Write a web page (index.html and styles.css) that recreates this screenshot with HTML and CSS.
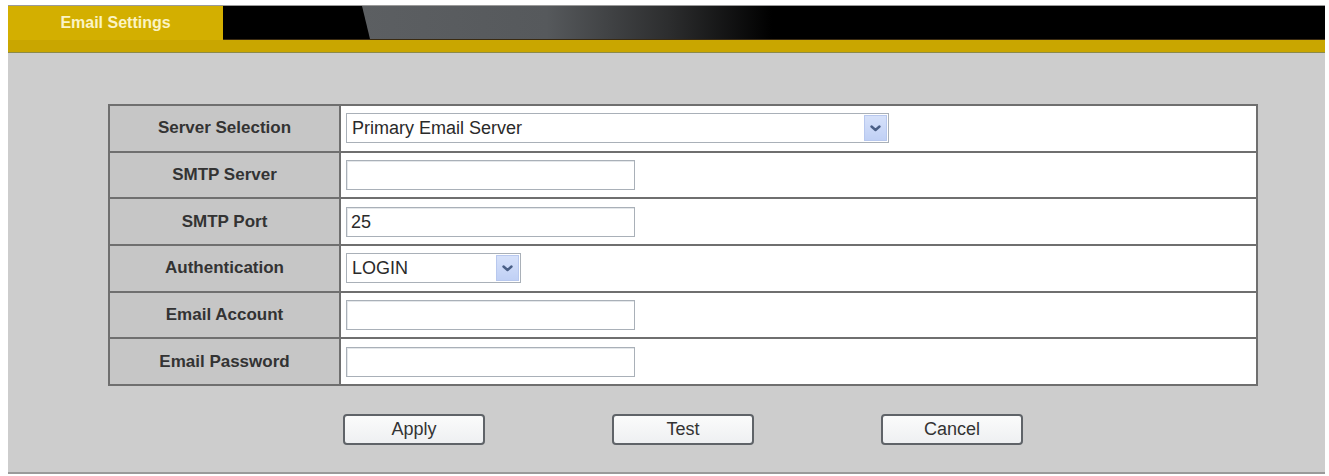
FILE: index.html
```html
<!DOCTYPE html>
<html>
<head>
<meta charset="utf-8">
<title>Email Settings</title>
<link rel="stylesheet" href="styles.css">
</head>
<body>
<div class="page">
  <div class="header">
    <div class="tab">Email Settings</div>
    <div class="bar"><div class="sheen"></div></div>
  </div>
  <div class="band"></div>
  <div class="panel">
    <table class="form">
      <tr>
        <td class="label">Server Selection</td>
        <td class="value">
          <div class="select wide"><span class="sel-text">Primary Email Server</span><span class="arrow"><svg width="11" height="7" viewBox="0 0 11 7"><path d="M1.5 1.5 L5.5 5 L9.5 1.5" fill="none" stroke="#4a5f86" stroke-width="2.4" stroke-linecap="round" stroke-linejoin="round"/></svg></span></div>
        </td>
      </tr>
      <tr>
        <td class="label">SMTP Server</td>
        <td class="value"><div class="input"></div></td>
      </tr>
      <tr>
        <td class="label">SMTP Port</td>
        <td class="value"><div class="input">25</div></td>
      </tr>
      <tr>
        <td class="label">Authentication</td>
        <td class="value">
          <div class="select narrow"><span class="sel-text">LOGIN</span><span class="arrow"><svg width="11" height="7" viewBox="0 0 11 7"><path d="M1.5 1.5 L5.5 5 L9.5 1.5" fill="none" stroke="#4a5f86" stroke-width="2.4" stroke-linecap="round" stroke-linejoin="round"/></svg></span></div>
        </td>
      </tr>
      <tr>
        <td class="label">Email Account</td>
        <td class="value"><div class="input"></div></td>
      </tr>
      <tr>
        <td class="label">Email Password</td>
        <td class="value"><div class="input"></div></td>
      </tr>
    </table>
    <div class="buttons">
      <button class="btn">Apply</button>
      <button class="btn">Test</button>
      <button class="btn">Cancel</button>
    </div>
  </div>
</div>
</body>
</html>
```
FILE: styles.css
```css
html, body {
  margin: 0;
  padding: 0;
  background: #ffffff;
}
body {
  font-family: "Liberation Sans", Arial, sans-serif;
}
.page {
  margin: 5px 4px 0 8px;
}
.header {
  display: flex;
  height: 35px;
  border-top: 1px solid #9a9a9a;
  box-sizing: border-box;
}
.tab {
  width: 215px;
  background: #d3af00;
  color: #fbf4c4;
  font-weight: bold;
  font-size: 16px;
  text-align: center;
  line-height: 33px;
}
.bar {
  flex: 1;
  background: #000;
  display: flex;
  border-bottom: 1px solid #3a2a10;
}
.sheen {
  margin-left: 139px;
  width: 410px;
  clip-path: polygon(0 0, 100% 0, 100% 100%, 8px 100%);
  background: linear-gradient(to right, #5c5f62 0%, #56595c 45%, #2c2d2e 75%, #000 100%);
}
.band {
  height: 12px;
  background: #c9a600;
  border-bottom: 1px solid #8c8a48;
}
.panel {
  background: #cdcdcd;
  border-bottom: 2px solid #9a9a9a;
  padding: 51px 0 0 100px;
  height: 421px;
  box-sizing: border-box;
}
.form {
  width: 1150px;
  border-collapse: collapse;
  border: 2px solid #6f6f6f;
}
.form td {
  border: 2px solid #6f6f6f;
  height: 44.67px;
  padding: 0;
}
.label {
  width: 229px;
  background: #c6c6c6;
  color: #333333;
  font-weight: bold;
  font-size: 17px;
  text-align: center;
}
.value {
  background: #ffffff;
  padding-left: 5px !important;
}
.input, .select {
  height: 30px;
  box-sizing: border-box;
  border: 1px solid #a9b0b8;
  background: #fff;
  font-size: 18px;
  color: #2a2a2a;
  line-height: 28px;
  padding-left: 4px;
}
.input {
  width: 289px;
  box-shadow: inset 1px 1px 0 #e4e7ea;
}
.select {
  display: flex;
  align-items: stretch;
  padding-right: 1px;
  padding-top: 1px;
  padding-bottom: 1px;
}
.select.wide {
  width: 543px;
}
.select.narrow {
  width: 175px;
}
.sel-text {
  flex: 1;
  line-height: 26px;
  padding-left: 1px;
}
.arrow {
  width: 23px;
  background: linear-gradient(#d6e1fa, #c0d0f5);
  border: 1px solid #b8c8ee;
  box-sizing: border-box;
  display: flex;
  align-items: center;
  justify-content: center;
}
.buttons {
  width: 1150px;
  display: flex;
  justify-content: center;
  gap: 127px;
  margin-top: 28px;
}
.btn {
  width: 142px;
  height: 31px;
  border: 2px solid #5f6368;
  border-radius: 4px;
  background: linear-gradient(#fbfbfb, #eef0f2);
  font-family: "Liberation Sans", Arial, sans-serif;
  font-size: 18px;
  color: #333333;
  padding: 0;
}
```
